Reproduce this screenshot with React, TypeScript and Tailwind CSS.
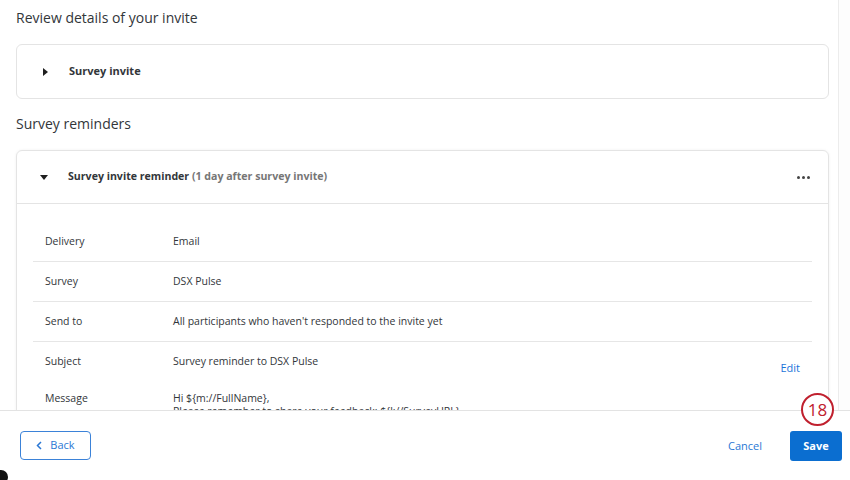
import React from "react";

const rows = [
  { label: "Delivery", value: "Email" },
  { label: "Survey", value: "DSX Pulse" },
  { label: "Send to", value: "All participants who haven't responded to the invite yet" },
];

const App: React.FC = () => {
  return (
    <div
      className="relative w-[850px] h-[480px] bg-white text-[#32363a] overflow-hidden flex flex-col"
      style={{ fontFamily: '"Open Sans", "Liberation Sans", sans-serif' }}
    >
      {/* scroll area */}
      <div className="h-[411px] border-b border-[#e3e3e3] overflow-hidden flex">
        <div className="flex-1 pl-4 pr-[9px]">
          <h2 className="text-[14px] leading-5 mt-[8px] text-[#32363a]">Review details of your invite</h2>

          <div className="mt-4 h-[55px] border border-[#e4e4e4] rounded-md flex items-center pl-[26px]">
            <svg width="5" height="8" viewBox="0 0 5 8" className="fill-[#1f1f1f]">
              <path d="M0 0 L5 4 L0 8 Z" />
            </svg>
            <span className="ml-[21px] text-[11px] font-bold">Survey invite</span>
          </div>

          <h2 className="text-[14px] leading-5 mt-[15px] text-[#32363a]">Survey reminders</h2>

          <div className="mt-[16px] border border-[#e4e4e4] rounded-t-md shadow-[0_0_3px_rgba(0,0,0,0.06)]">
            <div className="h-[53px] border-b border-[#e4e4e4] flex items-center pl-[23px] pr-[18px]">
              <svg width="8" height="5" viewBox="0 0 8 5" className="fill-[#1f1f1f]">
                <path d="M0 0 L8 0 L4 5 Z" />
              </svg>
              <span className="ml-[20px] text-[10.6px] font-bold">
                Survey invite reminder <span className="text-[#767676]">(1 day after survey invite)</span>
              </span>
              <div className="ml-auto flex gap-[2px]">
                <span className="w-[3px] h-[3px] rounded-full bg-[#444]" />
                <span className="w-[3px] h-[3px] rounded-full bg-[#444]" />
                <span className="w-[3px] h-[3px] rounded-full bg-[#444]" />
              </div>
            </div>

            <div className="pt-[18px] px-4 text-[10.5px]">
              {rows.map((r) => (
                <div key={r.label} className="h-[40px] border-b border-[#e6e6e6] flex items-center">
                  <span className="w-[140px] pl-[12px]">{r.label}</span>
                  <span>{r.value}</span>
                </div>
              ))}
              <div className="relative">
                <div className="h-[39px] flex items-center">
                  <span className="w-[140px] pl-[12px]">Subject</span>
                  <span>Survey reminder to DSX Pulse</span>
                </div>
                <div className="flex pt-[11px]">
                  <span className="w-[140px] pl-[12px] leading-[13px]">Message</span>
                  <div className="leading-[13px]">
                    <div>Hi ${"{"}m://FullName{"}"},</div>
                    <div>Please remember to share your feedback: ${"{"}l://SurveyURL{"}"}</div>
                  </div>
                </div>
                <span className="absolute right-[12px] top-[18px] text-[#1a73d9] text-[11px]">Edit</span>
              </div>
            </div>
          </div>
        </div>
        <div className="w-[12px] border-l border-[#ececec] bg-[#fdfdfd]" />
      </div>

      {/* footer */}
      <div className="flex-1 flex items-start justify-between pt-[20px] pl-5 pr-2">
        <button className="h-[29px] w-[71px] border border-[#3b82d8] rounded-[4px] flex items-center justify-center gap-2 text-[#2a77d4] text-[11px]">
          <svg width="6" height="9" viewBox="0 0 6 9" fill="none" stroke="#2a77d4" strokeWidth="1.5">
            <path d="M5 1 L1.5 4.5 L5 8" />
          </svg>
          Back
        </button>
        <div className="flex items-center gap-[28px]">
          <span className="text-[#2a77d4] text-[11px]">Cancel</span>
          <button className="h-[30px] w-[52px] bg-[#0b6ed0] rounded-[3px] text-white text-[11px] font-bold">Save</button>
        </div>
      </div>

      {/* step badge */}
      <div className="absolute left-[801px] top-[393px] w-[33px] h-[33px] rounded-full border-2 border-[#c0202e] bg-white flex items-center justify-center text-[#c0202e] text-[17px]">
        18
      </div>

      {/* window corner */}
      <div className="absolute left-[-6px] top-[470px] w-[14px] h-[14px] rounded-full bg-[#111]" />
    </div>
  );
};

export default App;
